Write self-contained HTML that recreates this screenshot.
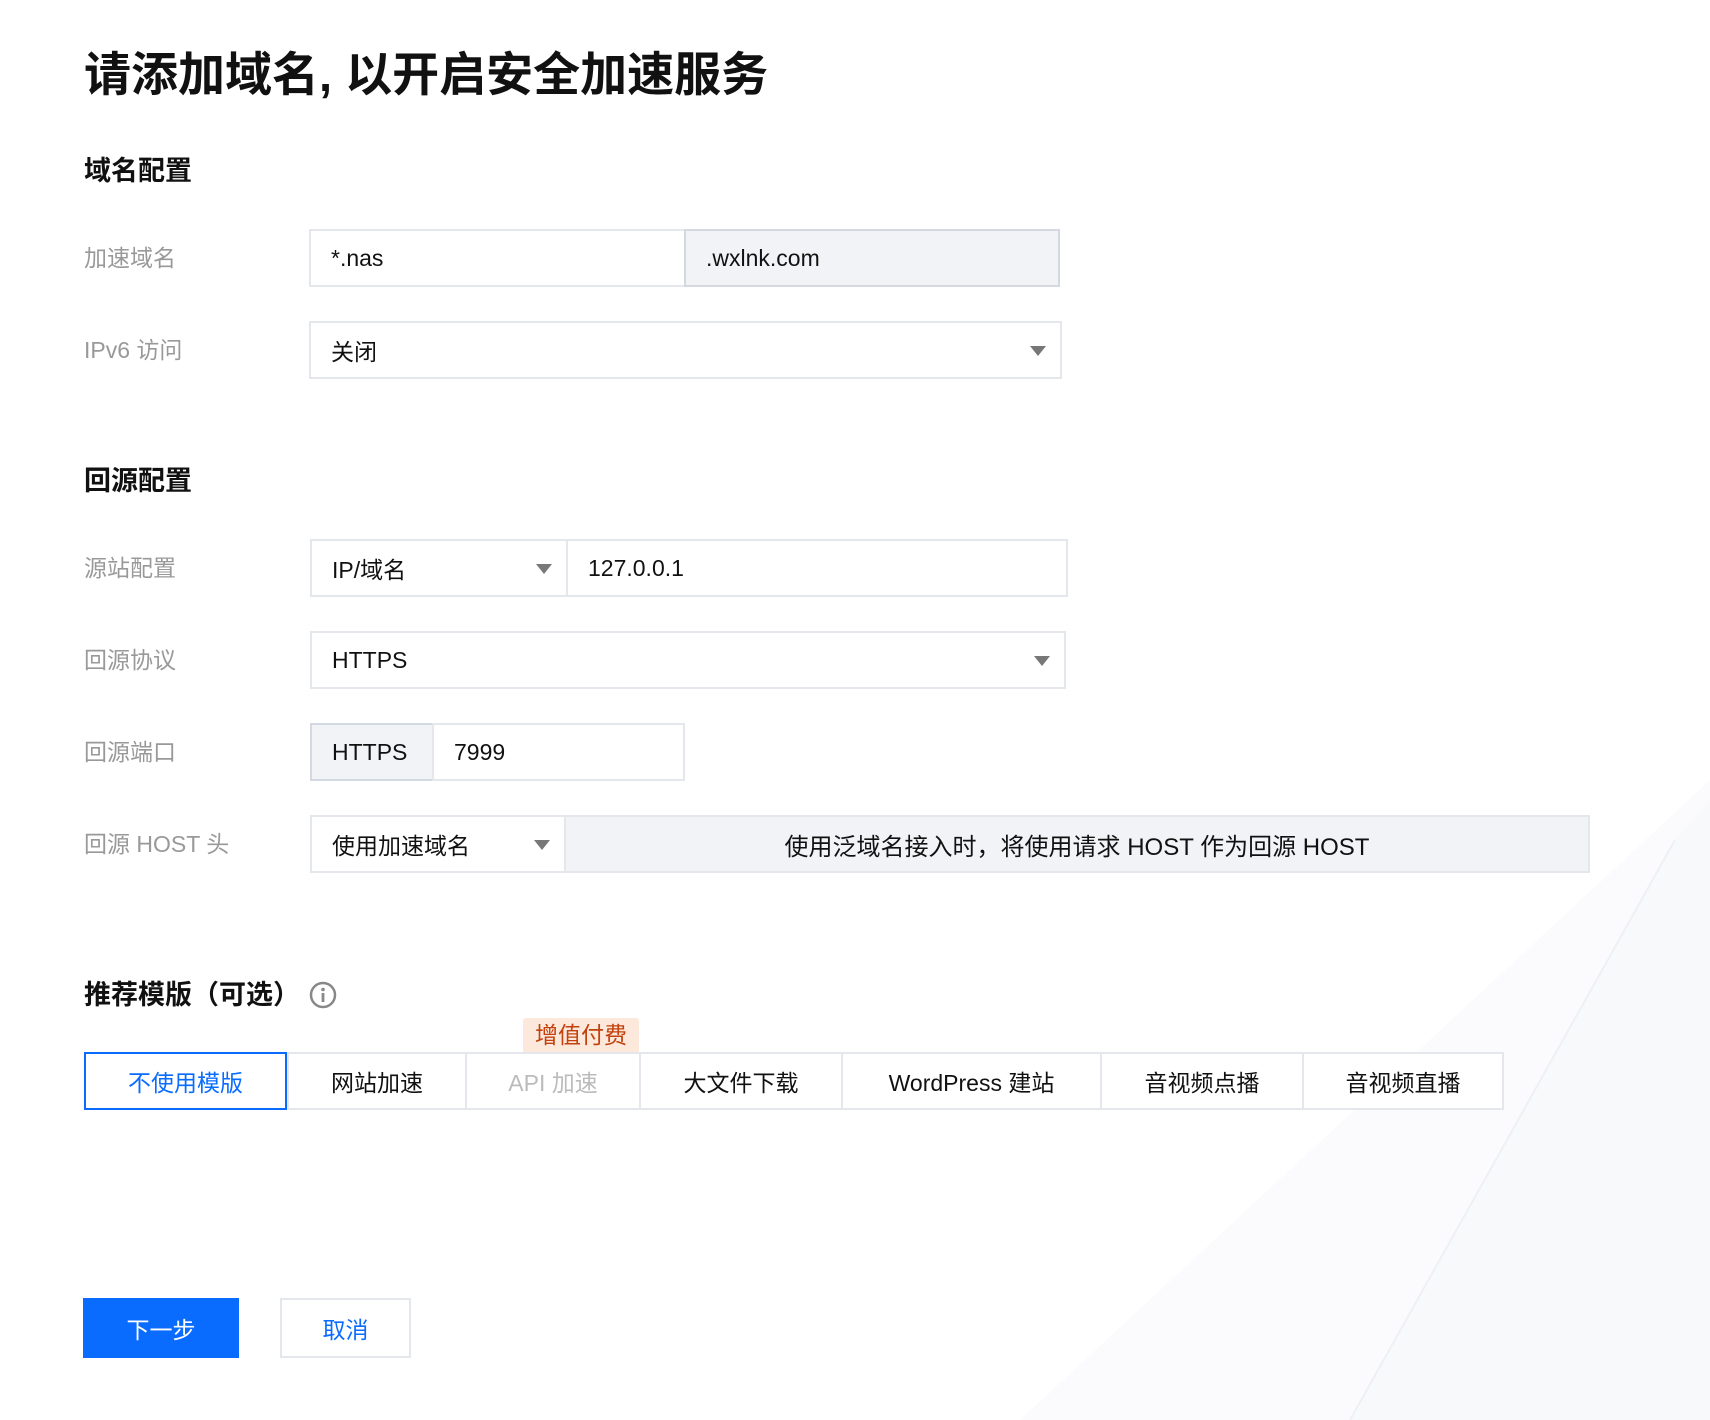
<!DOCTYPE html>
<html><head><meta charset="utf-8"><style>
*{margin:0;padding:0;box-sizing:border-box}
body{width:1710px;height:1420px;position:relative;background:#fff;font-family:"Liberation Sans","Noto Sans CJK SC",sans-serif;color:#111;overflow:hidden}
.a{position:absolute}
.h1{left:84px;top:40px;font-size:47px;font-weight:bold;line-height:70px;letter-spacing:0px}
.h2{left:84px;font-size:27px;font-weight:bold;line-height:36px}
.lb{left:84px;font-size:23px;color:#999;line-height:30px}
.bx{border:2px solid #e4e7ec;background:#fff;font-size:23px;display:flex;align-items:center;padding-left:20px}
.g{background:#f2f3f7;border-color:#d4d9e1}
.arr{position:absolute;right:14px;top:50%;margin-top:-4px;width:0;height:0;border-left:8px solid transparent;border-right:8px solid transparent;border-top:10px solid #777}
.tab{border:2px solid #e4e7ec;font-size:23px;display:flex;align-items:center;justify-content:center;background:#fff}
</style></head><body>
<svg class="a" style="left:0;top:0" width="1710" height="1420"><polygon points="1710,780 1710,1420 1020,1420" fill="#fbfbfd"/><polygon points="1350,1420 1675,840 1710,800 1710,1420" fill="#f8f9fb"/><line x1="1350" y1="1420" x2="1675" y2="840" stroke="#eef0f4" stroke-width="2"/></svg>
<div class="a h1">请添加域名, 以开启安全加速服务</div>
<div class="a h2" style="top:153px">域名配置</div>
<div class="a lb" style="top:243px">加速域名</div>
<div class="a bx" style="left:309px;top:229px;width:377px;height:58px">*.nas</div>
<div class="a bx g" style="left:684px;top:229px;width:376px;height:58px">.wxlnk.com</div>
<div class="a lb" style="top:335px">IPv6 访问</div>
<div class="a bx" style="left:309px;top:321px;width:753px;height:58px">关闭<span class="arr"></span></div>
<div class="a h2" style="top:463px">回源配置</div>
<div class="a lb" style="top:553px">源站配置</div>
<div class="a bx" style="left:310px;top:539px;width:258px;height:58px">IP/域名<span class="arr"></span></div>
<div class="a bx" style="left:566px;top:539px;width:502px;height:58px">127.0.0.1</div>
<div class="a lb" style="top:645px">回源协议</div>
<div class="a bx" style="left:310px;top:631px;width:756px;height:58px">HTTPS<span class="arr"></span></div>
<div class="a lb" style="top:737px">回源端口</div>
<div class="a bx g" style="left:310px;top:723px;width:124px;height:58px">HTTPS</div>
<div class="a bx" style="left:432px;top:723px;width:253px;height:58px">7999</div>
<div class="a lb" style="top:829px">回源 HOST 头</div>
<div class="a bx" style="left:310px;top:815px;width:256px;height:58px">使用加速域名<span class="arr"></span></div>
<div class="a bx g" style="left:564px;top:815px;width:1026px;height:58px;justify-content:center;padding-left:0;border-color:#e4e7ec;font-size:24px">使用泛域名接入时，将使用请求 HOST 作为回源 HOST</div>
<div class="a h2" style="top:977px">推荐模版（可选）</div>
<svg class="a" style="left:309px;top:981px" width="28" height="28"><circle cx="14" cy="14" r="12" fill="none" stroke="#888" stroke-width="2.5"/><circle cx="14" cy="8.5" r="1.8" fill="#888"/><rect x="12.6" y="12" width="2.8" height="9" fill="#888"/></svg>
<div class="a" style="left:523px;top:1018px;width:116px;height:34px;background:#fde8dc;color:#c2410c;font-size:23px;line-height:34px;text-align:center;border-radius:3px 3px 0 0">增值付费</div>
<div class="a tab" style="left:287px;top:1052px;width:180px;height:58px">网站加速</div>
<div class="a tab" style="left:465px;top:1052px;width:176px;height:58px;color:#bbb">API 加速</div>
<div class="a tab" style="left:639px;top:1052px;width:204px;height:58px">大文件下载</div>
<div class="a tab" style="left:841px;top:1052px;width:261px;height:58px">WordPress 建站</div>
<div class="a tab" style="left:1100px;top:1052px;width:204px;height:58px">音视频点播</div>
<div class="a tab" style="left:1302px;top:1052px;width:202px;height:58px">音视频直播</div>
<div class="a tab" style="left:84px;top:1052px;width:203px;height:58px;border-color:#0a6cff;color:#0a6cff">不使用模版</div>
<div class="a" style="left:83px;top:1298px;width:156px;height:60px;background:#0a6cff;color:#fff;font-size:23px;display:flex;align-items:center;justify-content:center">下一步</div>
<div class="a" style="left:280px;top:1298px;width:131px;height:60px;border:2px solid #e4e7ec;background:#fff;color:#0a6cff;font-size:23px;display:flex;align-items:center;justify-content:center">取消</div>
</body></html>
